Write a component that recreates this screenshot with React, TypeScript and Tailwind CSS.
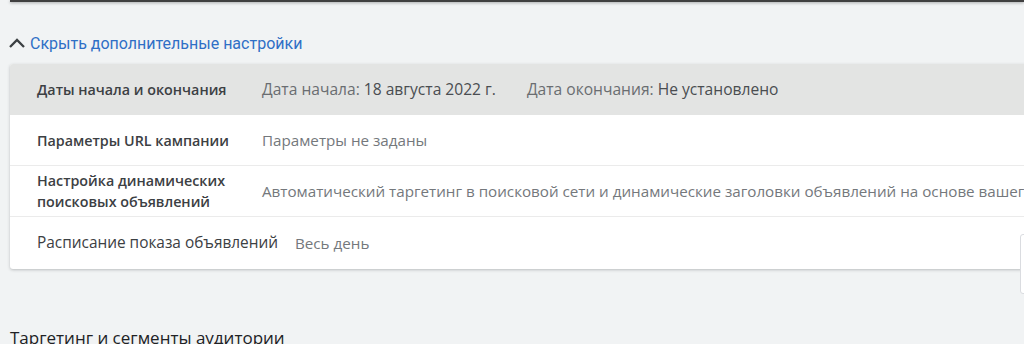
import React from 'react'

const rows = [
  { label: 'Параметры URL кампании', value: 'Параметры не заданы' },
  { label: 'Настройка динамических\nпоисковых объявлений', value: 'Автоматический таргетинг в поисковой сети и динамические заголовки объявлений на основе вашего сайта' },
]

const App = () => {
  return (
    <div className="w-[1024px] h-[344px] overflow-hidden bg-[#f1f3f4] font-['Open_Sans',sans-serif] relative">
      <div className="ml-[10px] h-[2px] bg-[#404040] shadow-[0_1px_3px_rgba(0,0,0,0.35)]" />

      <button className="mt-[32px] ml-[8px] flex items-center gap-[4px] text-[16px] text-[#2f6fc6] leading-[20px] font-['Roboto',sans-serif]">
        <svg width="18" height="14" viewBox="0 0 18 14" className="text-[#3c4043] mt-[-2px]">
          <polyline points="2,11 9,4 16,11" fill="none" stroke="currentColor" strokeWidth="2.3" />
        </svg>
        Скрыть дополнительные настройки
      </button>

      <div className="mt-[10px] ml-[10px] w-[1040px] bg-white rounded-[3px] shadow-[0_1px_3px_rgba(60,64,67,0.3)] overflow-hidden">
        <div className="h-[51px] bg-[#e3e4e3] flex items-center">
          <div className="w-[252px] shrink-0 pl-[27px] font-semibold text-[14.3px] text-[#3c4043]">Даты начала и окончания</div>
          <div className="text-[#6a6d71] text-[15.6px] whitespace-nowrap">
            Дата начала: <span className="font-medium text-[#4a4d51]">18 августа 2022 г.</span>
          </div>
          <div className="ml-[31px] text-[#6a6d71] text-[15.6px] whitespace-nowrap">
            Дата окончания: <span className="font-medium text-[#4a4d51]">Не установлено</span>
          </div>
        </div>

        {rows.map((r) => (
          <div key={r.label} className="h-[51px] border-b border-[#ebebeb] flex items-center">
            <div className="w-[252px] shrink-0 pl-[27px] font-semibold text-[14.3px] text-[#3c4043] leading-[21px] whitespace-pre">{r.label}</div>
            <div className="text-[#74787c] whitespace-nowrap text-[15.2px]">{r.value}</div>
          </div>
        ))}

        <div className="h-[52px] flex items-center">
          <div className="pl-[27px] text-[#3c4043] text-[15.4px] whitespace-nowrap">Расписание показа объявлений</div>
          <div className="ml-[17px] text-[#74787c] text-[15.2px] whitespace-nowrap">Весь день</div>
        </div>
      </div>

      <div className="absolute right-[-6px] top-[234px] w-[10px] h-[60px] bg-white border border-[#dadce0] rounded-[3px]" />

      <h2 className="mt-[56px] ml-[10px] text-[17px] text-[#202124]">Таргетинг и сегменты аудитории</h2>
    </div>
  )
}

export default App
